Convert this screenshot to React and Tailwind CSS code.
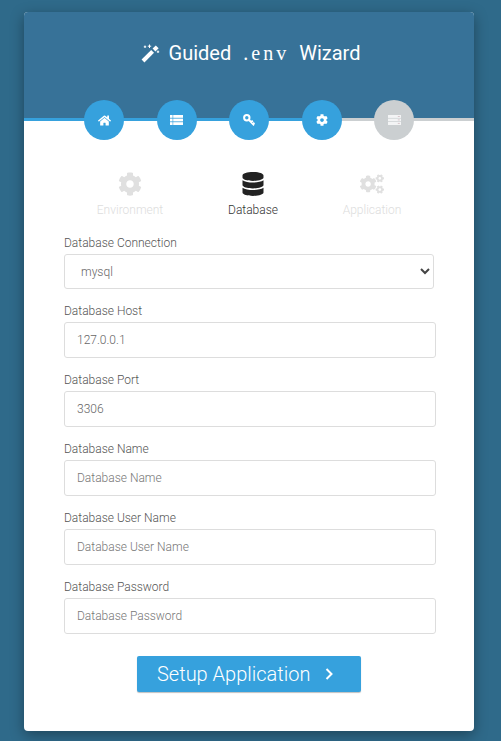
import React from "react";
import { FaHome, FaCog, FaDatabase, FaCogs } from "react-icons/fa";

function ListIcon() {
  return (
    <svg width="13" height="10" viewBox="0 0 13 10" fill="currentColor">
      <rect x="0" y="0" width="2.6" height="2.8" />
      <rect x="3.2" y="0" width="9.8" height="2.8" />
      <rect x="0" y="3.6" width="2.6" height="2.8" />
      <rect x="3.2" y="3.6" width="9.8" height="2.8" />
      <rect x="0" y="7.2" width="2.6" height="2.8" />
      <rect x="3.2" y="7.2" width="9.8" height="2.8" />
    </svg>
  );
}

function ServerIcon() {
  return (
    <svg width="13" height="10" viewBox="0 0 13 10">
      <rect x="0" y="0" width="13" height="10" fill="#f3f4f5" />
      <rect x="0" y="2.9" width="13" height="0.7" fill="#cbcfd1" />
      <rect x="0" y="6.3" width="13" height="0.7" fill="#cbcfd1" />
      <rect x="9.8" y="1" width="2" height="1" fill="#d8c6cb" />
      <rect x="9.8" y="4.4" width="2" height="1" fill="#d8c6cb" />
      <rect x="9.8" y="7.9" width="2" height="1" fill="#d8c6cb" />
    </svg>
  );
}

function KeyIcon() {
  return (
    <svg width="12" height="12" viewBox="0 0 12 12" fill="none" stroke="currentColor" strokeWidth="2">
      <circle cx="3.8" cy="3.8" r="2.7" />
      <path d="M5.8 5.8L11.2 11.2M8.2 8.2L9.8 6.6M10 10L11.4 8.6" />
    </svg>
  );
}

function WandIcon() {
  return (
    <svg className="mr-[9px]" width="19" height="19" viewBox="0 0 19 19" fill="none" stroke="currentColor">
      <path d="M2 17L11.6 7.4" strokeWidth="4" />
      <path d="M13 6L16.2 2.8" strokeWidth="4" />
      <path d="M4 1.5V4M2.8 2.8H5.2M8.5 0.5V4M6.8 2.2H10.2M17 6.5V9M15.8 7.8H18.2" strokeWidth="1" />
    </svg>
  );
}

const steps = [
  { icon: <FaHome className="text-[13px]" />, active: true },
  { icon: <ListIcon />, active: true },
  { icon: <KeyIcon />, active: true },
  { icon: <FaCog className="text-[12px]" />, active: true },
  { icon: <ServerIcon />, active: false },
];

const fields = [
  { label: "Database Host", value: "127.0.0.1" },
  { label: "Database Port", value: "3306" },
  { label: "Database Name", placeholder: "Database Name" },
  { label: "Database User Name", placeholder: "Database User Name" },
  { label: "Database Password", placeholder: "Database Password" },
];

function Tab({ Icon, label, active, className = "" }) {
  return (
    <div className={`flex w-[100px] flex-col items-center ${active ? "text-[#222222]" : "text-[#e0e0e0]"} ${className}`}>
      <Icon className="h-[24px] text-[24px]" />
      <span className={`mt-[6px] text-[12px] leading-[16px] ${active ? "text-[#333333]" : "text-[#dddddd]"}`}>{label}</span>
    </div>
  );
}

export default function App() {
  return (
    <div className="h-[741px] overflow-hidden bg-[#2f6a8a] pt-3 font-['Roboto',sans-serif] font-light">
      <div className="ml-6 h-[719px] w-[450px] overflow-hidden rounded-[4px] bg-white shadow-[0_4px_14px_rgba(0,0,0,0.35)]">
        <div className="relative h-[109px] border-b-[3px] border-[#cbcfd1] bg-[#377298]">
          <div className="absolute bottom-[-3px] left-0 h-[3px] w-[300px] bg-[#36a1dd]" />
          <h1 className="flex items-center justify-center pt-[29px] pl-[3px] text-[20px] leading-[24px] font-normal text-white">
            <WandIcon />
            <span>Guided</span>
            <code className="mr-[10px] ml-[12px] font-['Liberation_Serif',serif] text-[20px] font-normal tracking-[3px]">.env</code>
            <span>Wizard</span>
          </h1>
          <div className="absolute top-[88px] left-[60px] flex gap-[32.5px]">
            {steps.map(({ icon, active }, i) => (
              <div
                key={i}
                className={`relative flex h-10 w-10 items-center justify-center rounded-full text-white ${active ? "bg-[#36a1dd]" : "bg-[#cbcfd1]"}`}
              >
                {icon}
              </div>
            ))}
          </div>
        </div>

        <div className="px-10 pt-[51px]">
          <div className="flex w-[372px] justify-between px-[14px]">
            <Tab Icon={FaCog} label="Environment" className="ml-[2px]" />
            <Tab Icon={FaDatabase} label="Database" active className="ml-[4px]" />
            <Tab Icon={FaCogs} label="Application" />
          </div>

          <label className="mt-[17px] block text-[12px] leading-[16px] text-[#555555]">Database Connection</label>
          <div className="relative mt-[3px] flex h-[35px] w-[370px] items-center rounded-[3px] border border-[#dddddd] bg-white pl-[16px] text-[12px] text-[#666666]">
            mysql
            <svg className="absolute right-[3px] top-[11px]" width="10" height="10" viewBox="0 0 10 10" fill="none" stroke="#444444" strokeWidth="2">
              <path d="M1 3l4 4 4-4" />
            </svg>
          </div>

          {fields.map((f) => (
            <div key={f.label} className="mt-[14px]">
              <label className="block text-[12px] leading-[16px] text-[#555555]">{f.label}</label>
              <input
                readOnly
                value={f.value ?? ""}
                placeholder={f.placeholder}
                className="mt-[3px] block h-[36px] w-[372px] rounded-[3px] border border-[#dddddd] bg-white px-3 text-[12px] text-[#666666] outline-none placeholder:text-[#777777]"
              />
            </div>
          ))}

          <div className="mt-[22px] flex justify-center">
            <button className="flex h-[36px] w-[224px] items-center rounded-[2px] bg-[#36a1dd] pl-[20px] text-[20px] font-light text-white shadow-[0_1px_1px_rgba(0,0,0,0.25)]">
              Setup Application
              <svg className="ml-[15px]" width="8" height="12" viewBox="0 0 8 12" fill="none" stroke="currentColor" strokeWidth="2">
                <path d="M1.5 1L6.5 6L1.5 11" />
              </svg>
            </button>
          </div>
        </div>
      </div>
    </div>
  );
}
